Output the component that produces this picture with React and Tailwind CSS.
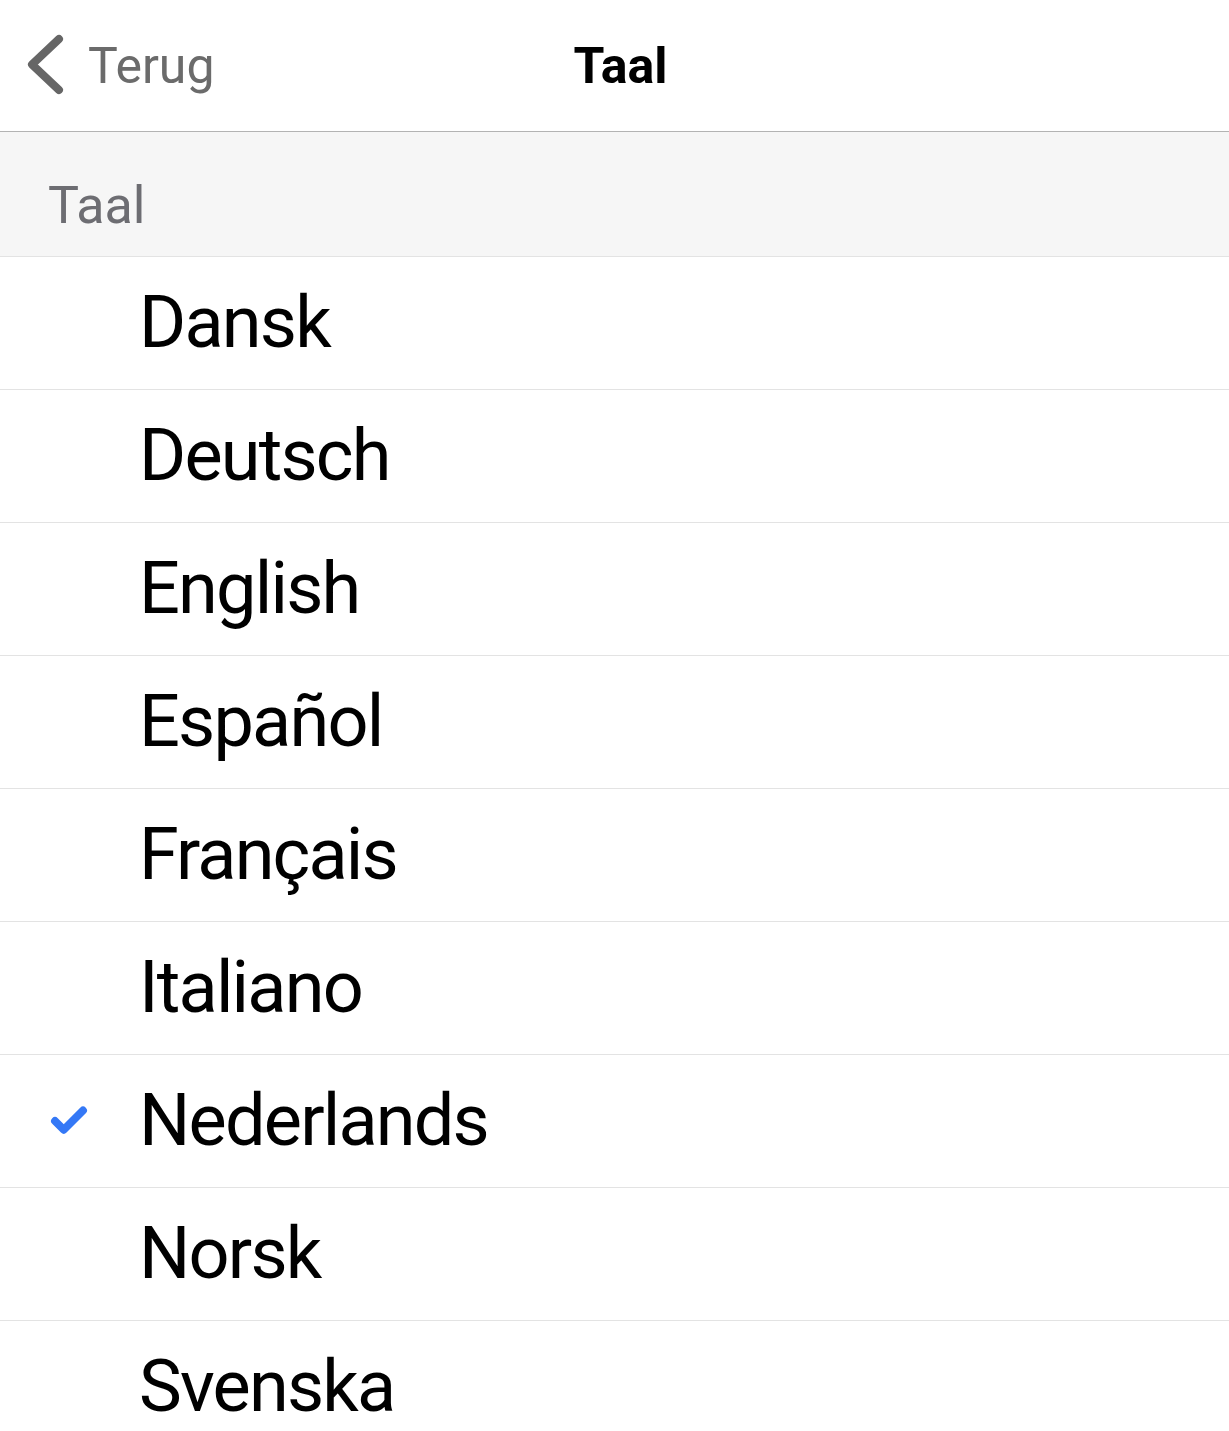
import { Check } from 'lucide-react';

const LANGUAGES = [
  'Dansk',
  'Deutsch',
  'English',
  'Español',
  'Français',
  'Italiano',
  'Nederlands',
  'Norsk',
  'Svenska',
];

const SELECTED = 'Nederlands';

const App = () => {
  return (
    <div
      className="w-full min-h-screen bg-white text-black"
      style={{ fontFamily: 'Roboto, "Liberation Sans", sans-serif' }}
    >
      {/* Nav bar */}
      <div className="relative h-[132px] flex items-center border-b border-[#b3b3b3]">
        <button className="flex items-center pl-[24px] text-[#6b6b6b]">
          <svg width="42" height="68" viewBox="0 0 42 68" fill="none">
            <path
              d="M35 7 L8 32.5 L35 58"
              stroke="#666666"
              strokeWidth="8"
              strokeLinecap="round"
              strokeLinejoin="round"
            />
          </svg>
          <span className="ml-[22px] text-[50px] leading-none text-[#6b6b6b]">Terug</span>
        </button>
        <h1 className="absolute left-[calc(50%+6px)] -translate-x-1/2 text-[50px] font-bold leading-none">
          Taal
        </h1>
      </div>

      {/* Section header */}
      <div className="h-[125px] bg-[#f6f6f6] border-b border-[#e3e3e3] flex items-center pl-[48px] pt-[24px]">
        <span className="text-[52px] leading-none text-[#6d6d72]">Taal</span>
      </div>

      {/* Languages */}
      <ul>
        {LANGUAGES.map((lang) => (
          <li
            key={lang}
            className="h-[133px] flex items-center border-b border-[#e3e3e3]"
          >
            <div className="w-[139px] flex items-center pl-[48px]">
              {lang === SELECTED && (
                <Check className="w-[42px] h-[42px] text-[#3478f6]" strokeWidth={4.5} />
              )}
            </div>
            <span className="text-[72px] leading-none tracking-[-1.8px]">{lang}</span>
          </li>
        ))}
      </ul>
    </div>
  );
};

export default App;
